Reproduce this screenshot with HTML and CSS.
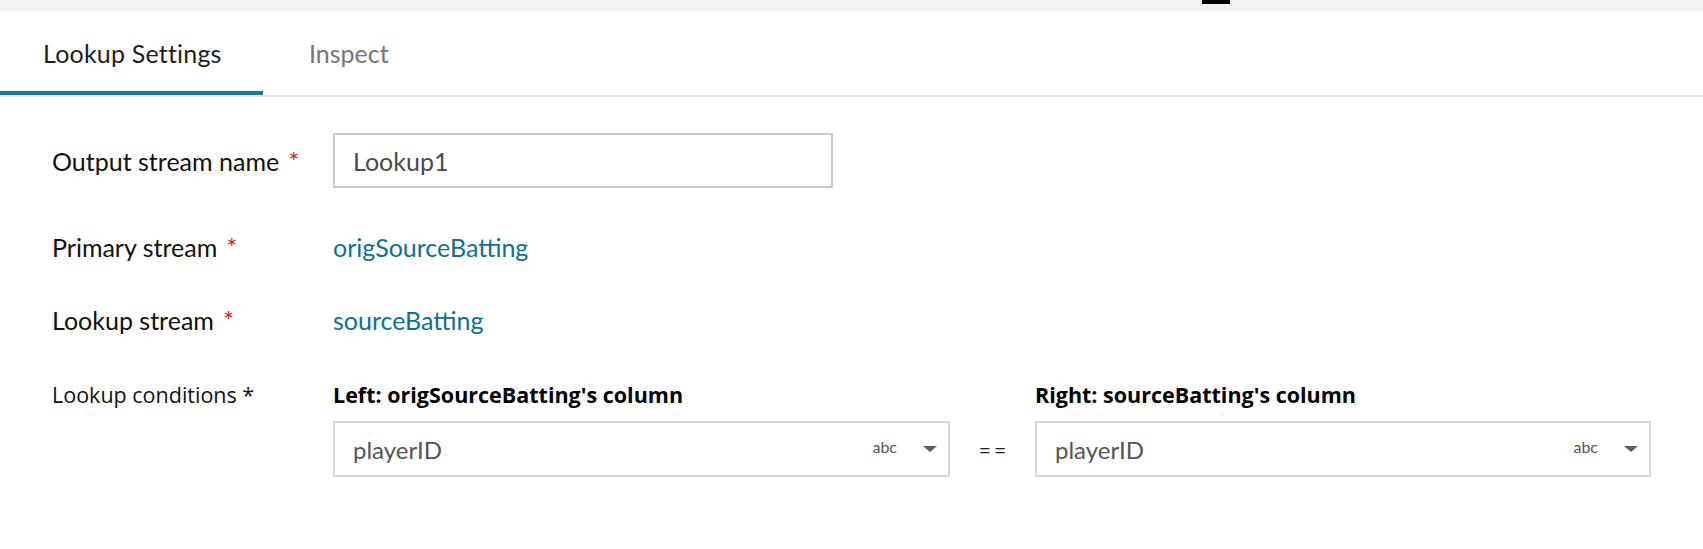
FILE: index.html
```html
<!DOCTYPE html>
<html lang="en">
<head>
<meta charset="utf-8">
<title>Lookup Settings</title>
<link rel="stylesheet" href="styles.css">
</head>
<body>
<div class="topbar"><span class="topbar-mark"></span></div>
<div class="tabs">
  <div class="tab tab-active">Lookup Settings</div>
  <div class="tab tab-inactive">Inspect</div>
</div>
<div class="form">
  <div class="row row-name">
    <div class="label">Output stream name <span class="req">*</span></div>
    <div class="text-input">Lookup1</div>
  </div>
  <div class="row row-primary">
    <div class="label">Primary stream <span class="req">*</span></div>
    <div class="value">origSourceBatting</div>
  </div>
  <div class="row row-lookup">
    <div class="label">Lookup stream <span class="req">*</span></div>
    <div class="value">sourceBatting</div>
  </div>
  <div class="conditions">
    <div class="cond-label">Lookup conditions *</div>
    <div class="cond-head cond-left">Left: origSourceBatting's column</div>
    <div class="cond-head cond-right">Right: sourceBatting's column</div>
    <div class="select select-left">
      <span class="select-text">playerID</span>
      <span class="select-type">abc</span>
      <span class="caret"></span>
    </div>
    <div class="eq">==</div>
    <div class="select select-right">
      <span class="select-text">playerID</span>
      <span class="select-type">abc</span>
      <span class="caret"></span>
    </div>
  </div>
</div>
</body>
</html>
```
FILE: styles.css
```css
* { box-sizing: border-box; }

html, body {
  margin: 0;
  padding: 0;
  background: #ffffff;
}

body {
  font-family: "Lato", "Open Sans", sans-serif;
  color: #1b1b1b;
  width: 1703px;
  height: 549px;
  overflow: hidden;
}

.topbar {
  height: 11px;
  background: #f2f2f2;
  display: flex;
  align-items: flex-start;
}

.topbar-mark {
  display: block;
  margin-left: 1202px;
  width: 28px;
  height: 4px;
  background: #000000;
}

.tabs {
  display: flex;
  height: 86px;
  border-bottom: 2px solid #e1e1e1;
}

.tab {
  height: 84px;
  padding-top: 27px;
  font-size: 25px;
  line-height: 30px;
  border-bottom: 4px solid transparent;
}

.tab-active {
  width: 263px;
  padding-left: 43px;
  color: #1e1e1e;
  letter-spacing: 0.2px;
  border-bottom-color: #1b7a9c;
}

.tab-inactive {
  padding-left: 46px;
  color: #767676;
}

.form {
  padding-left: 52px;
}

.row {
  display: flex;
  align-items: center;
}

.label {
  width: 281px;
  font-size: 25px;
  line-height: 30px;
  color: #111111;
}

.req {
  color: #e3140f;
  margin-left: 3px;
}

.row-name {
  margin-top: 36px;
  height: 55px;
}

.row-primary {
  margin-top: 44px;
}

.row-lookup {
  margin-top: 43px;
}

.text-input {
  width: 500px;
  height: 55px;
  border: 2px solid #cbcbcb;
  padding-left: 18px;
  display: flex;
  align-items: center;
  font-size: 25px;
  color: #4a4a4a;
}

.value {
  font-size: 25px;
  line-height: 30px;
  color: #10708f;
}

.conditions {
  margin-top: 47px;
  display: grid;
  grid-template-columns: 281px 617px 85px 616px;
  grid-template-rows: 26px 56px;
  row-gap: 13px;
}

.cond-label {
  grid-column: 1;
  grid-row: 1;
  font-family: "Open Sans", "Lato", sans-serif;
  font-size: 21.5px;
  line-height: 26px;
  color: #111111;
}

.cond-head {
  grid-row: 1;
  font-family: "Open Sans", "Lato", sans-serif;
  font-size: 21.5px;
  line-height: 26px;
  font-weight: 700;
  color: #000000;
}

.cond-left { grid-column: 2; }
.cond-right { grid-column: 4; }

.select {
  grid-row: 2;
  height: 56px;
  border: 2px solid #d8d8d8;
  display: flex;
  align-items: center;
  padding: 0 11px 0 18px;
}

.select-left { grid-column: 2; }
.select-right { grid-column: 4; }

.select-text {
  flex: 1;
  font-size: 24px;
  color: #555555;
}

.select-type {
  font-size: 16px;
  color: #555555;
  margin-right: 26px;
  margin-bottom: 6px;
}

.caret {
  width: 0;
  height: 0;
  border-left: 7px solid transparent;
  border-right: 7px solid transparent;
  border-top: 6px solid #5e5e5e;
}

.eq {
  grid-column: 3;
  grid-row: 2;
  display: flex;
  align-items: center;
  justify-content: center;
  font-size: 21px;
  letter-spacing: 3px;
  padding-left: 3px;
  color: #222222;
}
```
